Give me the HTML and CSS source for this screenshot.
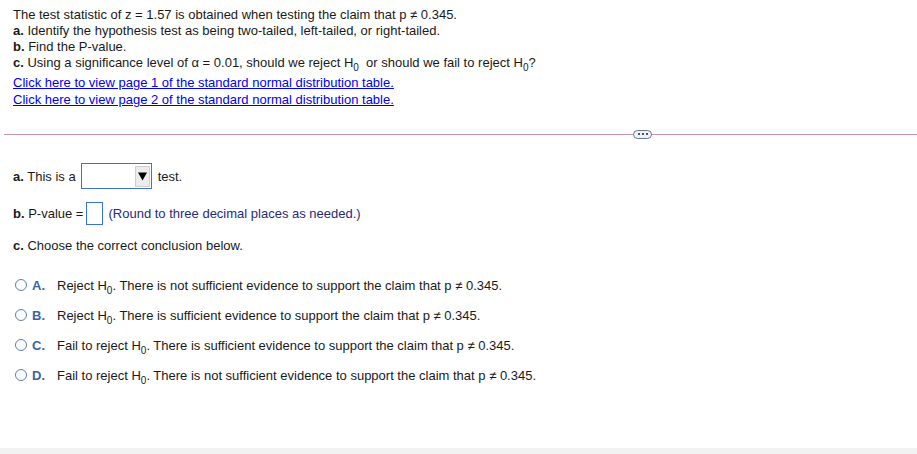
FILE: index.html
```html
<!DOCTYPE html>
<html lang="en">
<head>
    <meta charset="UTF-8">
    <title>Hypothesis Test</title>
    <link rel="stylesheet" href="styles.css">
</head>
<body>
    <div class="page">
        <div class="question">
            <p>The test statistic of z = 1.57 is obtained when testing the claim that p &ne; 0.345.</p>
            <p><b>a.</b> Identify the hypothesis test as being two-tailed, left-tailed, or right-tailed.</p>
            <p><b>b.</b> Find the P-value.</p>
            <p><b>c.</b> Using a significance level of &alpha; = 0.01, should we reject H<sub>0</sub> &nbsp;or should we fail to reject H<sub>0</sub>?</p>
            <div class="links">
                <a href="#">Click here to view page 1 of the standard normal distribution table.</a>
                <a href="#">Click here to view page 2 of the standard normal distribution table.</a>
            </div>
        </div>

        <div class="divider">
            <span class="more">
                <svg width="10" height="3" viewBox="0 0 10 3">
                    <rect x="0" y="0" width="2" height="2" fill="#4a5666"/>
                    <rect x="4" y="0" width="2" height="2" fill="#4a5666"/>
                    <rect x="8" y="0" width="2" height="2" fill="#4a5666"/>
                </svg>
            </span>
        </div>

        <div class="answers">
            <div class="row part-a">
                <span><b>a.</b> This is a</span>
                <span class="select">
                    <span class="arrow">
                        <svg width="9" height="9" viewBox="0 0 9 9"><path d="M0 0.5H9L4.5 8.5Z" fill="#000"/></svg>
                    </span>
                </span>
                <span>test.</span>
            </div>
            <div class="row part-b">
                <span><b>b.</b> P-value =</span>
                <span class="input"></span>
                <span class="hint">(Round to three decimal places as needed.)</span>
            </div>
            <div class="row part-c">
                <span><b>c.</b> Choose the correct conclusion below.</span>
            </div>

            <ul class="choices">
                <li><span class="radio"></span><span class="letter">A.</span><span>Reject H<sub>0</sub>. There is not sufficient evidence to support the claim that p &ne; 0.345.</span></li>
                <li><span class="radio"></span><span class="letter">B.</span><span>Reject H<sub>0</sub>. There is sufficient evidence to support the claim that p &ne; 0.345.</span></li>
                <li><span class="radio"></span><span class="letter">C.</span><span>Fail to reject H<sub>0</sub>. There is sufficient evidence to support the claim that p &ne; 0.345.</span></li>
                <li><span class="radio"></span><span class="letter">D.</span><span>Fail to reject H<sub>0</sub>. There is not sufficient evidence to support the claim that p &ne; 0.345.</span></li>
            </ul>
        </div>
    </div>
    <div class="footer"></div>
</body>
</html>
```

FILE: styles.css
```css
body {
    margin: 0;
    font-family: "Liberation Sans", Arial, sans-serif;
    font-size: 13px;
    color: #1a1a1a;
    background: #fff;
}
.page {
    height: 448px;
}
.question {
    padding: 7px 13px 0;
}
.question p {
    margin: 0;
    line-height: 16px;
}
sub {
    font-size: 10px;
    vertical-align: -4px;
    line-height: 0;
}
.links {
    display: flex;
    flex-direction: column;
    align-items: flex-start;
    margin-top: 3px;
}
.links a {
    color: #0000ee;
    line-height: 17px;
}
.divider {
    margin: 26px 0 0 4px;
    height: 1px;
    background: #c497ae;
    position: relative;
}
.more {
    position: absolute;
    left: 629px;
    top: -4px;
    width: 17px;
    height: 7px;
    border: 1px solid #6b7a8c;
    border-radius: 5px;
    background: #eef1f5;
    display: flex;
    align-items: center;
    justify-content: center;
}
.more svg {
    display: block;
}
.answers {
    padding: 28px 13px 0;
}
.row {
    display: flex;
    align-items: center;
    gap: 6px;
}
.part-a {
    height: 26px;
    gap: 4px;
}
.select {
    width: 68px;
    height: 24px;
    border: 1px solid #3a74d0;
    display: flex;
    justify-content: flex-end;
    align-items: center;
    padding-right: 1px;
    margin-left: 1px;
    margin-right: 2px;
}
.arrow {
    width: 15px;
    height: 21px;
    background: #ececec;
    border: 1px solid #cfcfcf;
    box-sizing: border-box;
    display: flex;
    align-items: center;
    justify-content: center;
}
.arrow svg {
    display: block;
}
.part-b {
    margin-top: 13px;
    gap: 3px;
}
.input {
    width: 15px;
    height: 21px;
    border: 1px solid #3a74d0;
}
.hint {
    margin-left: 2px;
    color: #2a2a78;
}
.part-c {
    margin-top: 13px;
}
.choices {
    list-style: none;
    margin: 17px 0 0;
    padding: 0 0 0 2px;
}
.choices li {
    display: flex;
    align-items: center;
    height: 30px;
}
.radio {
    width: 10px;
    height: 10px;
    border: 1px solid #5b7fb5;
    border-radius: 50%;
    margin-right: 5px;
}
.letter {
    color: #3c64a5;
    font-weight: bold;
    width: 25px;
}
.footer {
    height: 6px;
    background: #f2f2f2;
}
```
